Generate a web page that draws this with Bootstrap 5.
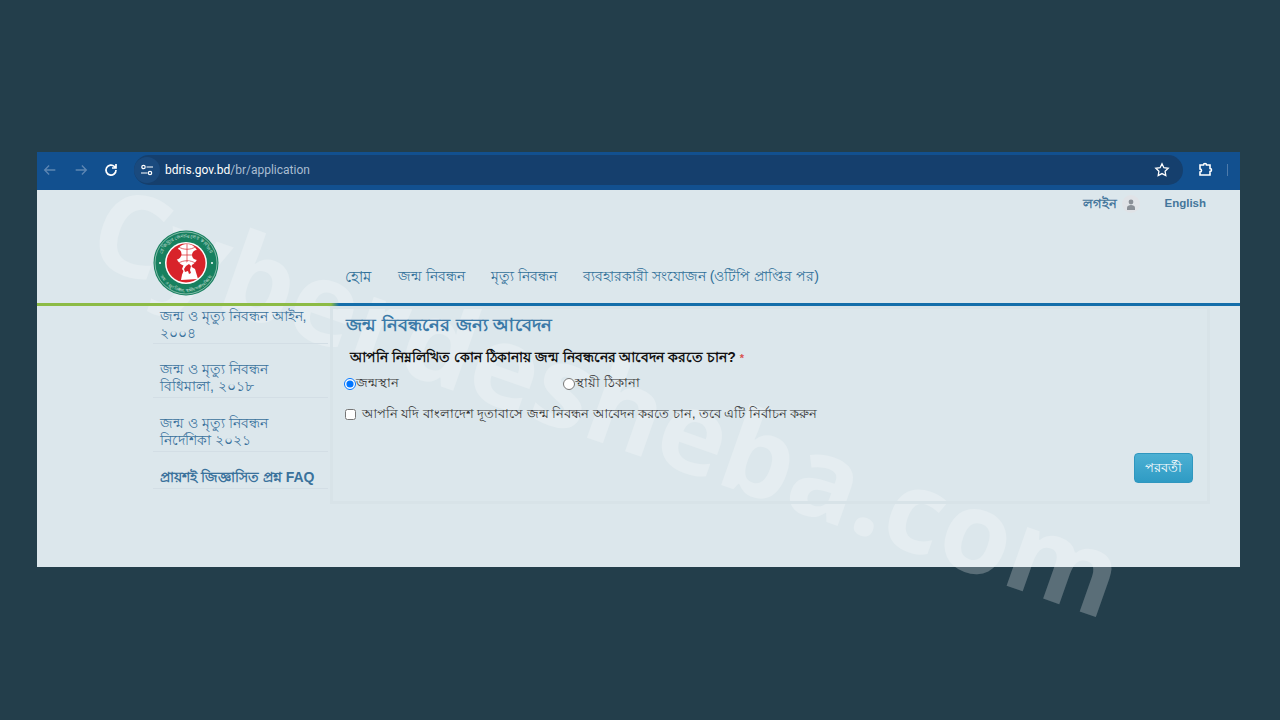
<!DOCTYPE html>
<html lang="bn">
<head>
  <meta charset="UTF-8" />
  <title>bdris application</title>
  <link href="https://cdn.jsdelivr.net/npm/bootstrap@5.3.3/dist/css/bootstrap.min.css" rel="stylesheet">
  <style>
    html, body { height: 100%; }
    body {
      background: #233e4b;
      font-family: "Liberation Sans", "Noto Sans", sans-serif;
      overflow: hidden;
      position: relative;
    }
    .shot-wrap { padding: 152px 40px 0 37px; }
    .browser-bar {
      height: 38px;
      background: #12508f;
      padding: 0 12px 3px 5px;
      position: relative;
      z-index: 2;
    }
    .nav-ic { width: 16px; height: 16px; }
    .addr-pill {
      height: 30px;
      width: 1049px;
      margin-left: 15px;
      border-radius: 15px;
      background: #153f6d;
      font-family: Roboto, sans-serif;
      font-size: 12px;
      color: #fff;
    }
    .addr-pill span.dim { color: #a9bdd2; }
    .tune-ic {
      width: 26px; height: 26px; border-radius: 50%;
      background: #1a4a7e;
      margin: 0 5px 0 0;
    }
    .page-area { background: #dce7ec; height: 377px; }
    .page-inner { position: relative; z-index: 2; }
    .top-links { height: 28px; padding-right: 34px; font-size: 11.5px; font-weight: 700; color: #44769b; }
    .login-txt { font-size: 13px; }
    .user-dot { width: 18px; height: 18px; border-radius: 50%; background: #e0e3e7; margin-left: 5px; margin-right: 2px; }
    .header-row { height: 85px; padding-left: 116px; }
    .logo-box { width: 66px; height: 66px; margin-top: 12px; }
    .main-links { gap: 26px; margin-left: 126px; margin-top: 48px; font-size: 14.1px; color: #2f6f98; font-weight: 500; }
    .home-link { font-size: 15px; margin-right: 1px; }
    .rule-line { height: 3px; background: linear-gradient(to right, #8cbb45 0, #8cbb45 294px, #146eaa 302px, #146eaa 100%); }
    .body-row { padding-left: 116px; }
    .side-menu { width: 175px; }
    .side-menu a {
      display: block;
      padding: 17px 6px 2px 7px;
      line-height: 17px;
      font-size: 14px;
      color: #3a729c;
      text-decoration: none;
      border-bottom: 1px solid #d3dee5;
    }
    .side-menu a.first-item { padding-top: 2px; padding-bottom: 1px; }
    .side-menu a.faq { font-weight: 700; }
    .form-panel {
      width: 880px;
      margin-left: 2px;
      height: 198px;
      border: 3px solid #d8e3e8;
      padding: 5px 13px;
      position: relative;
    }
    .form-title { font-size: 18.3px; letter-spacing: .18px; font-weight: 700; color: #3b7aa8; margin: 0 0 11px; line-height: 22px; }
    .q-line { font-size: 14.05px; font-weight: 700; color: #111; padding-left: 4px; margin-bottom: 6px; line-height: 20px; }
    .req-star { color: #d9534f; font-size: 11px; }
    .radio-line { font-size: 12.7px; color: #333; margin-left: -2px; }
    .radio-line input { margin: 0; width: 12px; height: 12px; }
    .radio-slot { width: 219px; }
    .check-line { font-size: 12.55px; color: #333; margin-top: 12px; margin-left: -1px; }
    .check-line input { width: 11px; height: 11px; margin: 0 6px 0 0; }
    .next-btn {
      position: absolute; right: 14px; bottom: 18px;
      width: 59px; height: 30px; padding: 0;
      background: linear-gradient(#4cb0d3, #2f9bc4);
      border: 1px solid #2f97bf;
      border-radius: 4px;
      color: #fff; font-size: 13px;
    }
    .wm-text {
      position: absolute;
      z-index: 1;
      left: 98px; top: 162px;
      transform: rotate(19.4deg);
      transform-origin: left center;
      font-family: "Open Sans", sans-serif;
      font-weight: 700;
      font-size: 114px;
      line-height: 1;
      white-space: nowrap;
      color: rgba(255,255,255,.25);
      pointer-events: none;
    }
  </style>
</head>
<body>
<div class="shot-wrap">
  <div class="browser-bar d-flex align-items-center">
    <svg class="nav-ic" viewBox="-1 -1 18 18" fill="none" stroke="#5d86b3" stroke-width="1.5"><path d="M14 8H2.5M7 3 2 8l5 5"/></svg>
    <svg class="nav-ic" style="margin-left:15px" viewBox="-1 -1 18 18" fill="none" stroke="#5d86b3" stroke-width="1.5"><path d="M2 8h11.5M9 3l5 5-5 5"/></svg>
    <svg class="nav-ic" style="margin-left:14px" viewBox="0 0 16 16" fill="none" stroke="#fff" stroke-width="1.7"><path d="M13 8a5 5 0 1 1-1.5-3.5L13 6M13 2v4H9"/></svg>
    <div class="addr-pill d-flex align-items-center">
      <div class="tune-ic d-flex align-items-center justify-content-center">
        <svg width="14" height="14" viewBox="0 0 14 14" fill="none" stroke="#fff" stroke-width="1.2"><circle cx="3.5" cy="4" r="1.7"/><path d="M6.5 4H13M1 10h6.5"/><circle cx="10" cy="10" r="1.7"/></svg>
      </div>
      <span>bdris.gov.bd<span class="dim">/br/application</span></span>
      <svg class="ms-auto" style="margin-right:13px" width="16" height="16" viewBox="0 0 16 16" fill="none" stroke="#fff" stroke-width="1.3"><path d="m8 1.8 1.9 3.9 4.3.6-3.1 3 .7 4.3L8 11.6l-3.8 2 .7-4.3-3.1-3 4.3-.6z"/></svg>
    </div>
    <svg style="margin-left:14px" width="16" height="16" viewBox="0 0 16 16" fill="none" stroke="#fff" stroke-width="1.6"><path d="M3 3h3.5a1.5 1.5 0 0 1 3 0H13v3.5a1.5 1.5 0 0 1 0 3V13H3v-3a1.5 1.5 0 0 0 0-3z"/></svg>
    <div class="ms-auto" style="width:1px;height:12px;background:#4e7bab"></div>
  </div>
  <div class="page-area">
    <div class="page-inner">
    <div class="top-links d-flex justify-content-end align-items-center">
      <span class="login-txt">লগইন</span>
      <span class="user-dot d-inline-flex align-items-center justify-content-center">
        <svg width="10" height="11" viewBox="0 0 10 11" fill="#8a8f96"><circle cx="5" cy="3" r="2.4"/><path d="M1 11V8.5C1 7 3 6 5 6s4 1 4 2.5V11z"/></svg>
      </span>
      <span style="margin-left:22px">English</span>
    </div>
    <div class="header-row d-flex">
      <svg class="logo-box" viewBox="0 0 66 66">
        <defs>
          <path id="ringTop" d="M7.5 33a25.5 25.5 0 0 1 51 0"/>
          <path id="ringBot" d="M4 33a29 29 0 0 0 58 0"/>
        </defs>
        <circle cx="33" cy="33" r="32.5" fill="#17805f"/>
        <circle cx="33" cy="33" r="31" fill="none" stroke="#cfe3da" stroke-width=".6"/>
        <text font-size="4.6" fill="#e9f3ee" text-anchor="middle"><textPath href="#ringTop" startOffset="50%">রেজিস্ট্রার জেনারেলের কার্যালয়</textPath></text>
        <text font-size="4.2" fill="#e9f3ee" text-anchor="middle"><textPath href="#ringBot" startOffset="50%">জন্ম ও মৃত্যু নিবন্ধন, স্থানীয় সরকার বিভাগ</textPath></text>
        <circle cx="33" cy="33" r="21" fill="#fff"/>
        <circle cx="33" cy="33" r="19.5" fill="#d8232a"/>
        <circle cx="34" cy="25" r="11" fill="#fff"/>
        <path d="M34 14v22M23 25h22M26 17c4 3 12 3 16 0M26 33c4-3 12-3 16 0" fill="none" stroke="#d8232a" stroke-width=".7"/>
        <circle cx="23" cy="24" r="5.5" fill="#d8232a"/>
        <circle cx="44" cy="25" r="5" fill="#d8232a"/>
        <path d="M28 50c1-6 2-9 5-12l4-2 5 3 3 10z" fill="#fff"/>
        <path d="M31 34l5-3 3 3-1 6 3 3-4 3-1-4-4 1-3-4z" fill="#fff"/>
        <path d="M33 36l3-2 2 2-1 4 1 3-2 1-1-3-3 1-1-3z" fill="#d8232a"/>
        <circle cx="7" cy="33" r="1" fill="#fff"/>
        <circle cx="59" cy="33" r="1" fill="#fff"/>
      </svg>
      <div class="main-links d-flex">
        <span class="home-link">হোম</span><span>জন্ম নিবন্ধন</span><span>মৃত্যু নিবন্ধন</span><span>ব্যবহারকারী সংযোজন (ওটিপি প্রাপ্তির পর)</span>
      </div>
    </div>
    <div class="rule-line"></div>
    <div class="body-row d-flex">
      <div class="side-menu">
        <a href="#" class="first-item">জন্ম ও মৃত্যু নিবন্ধন আইন, ২০০৪</a>
        <a href="#">জন্ম ও মৃত্যু নিবন্ধন<br>বিধিমালা, ২০১৮</a>
        <a href="#">জন্ম ও মৃত্যু নিবন্ধন<br>নির্দেশিকা ২০২১</a>
        <a href="#" class="faq">প্রায়শই জিজ্ঞাসিত প্রশ্ন FAQ</a>
      </div>
      <div class="form-panel">
        <div class="form-title">জন্ম নিবন্ধনের জন্য আবেদন</div>
        <div class="q-line">আপনি নিম্নলিখিত কোন ঠিকানায় জন্ম নিবন্ধনের আবেদন করতে চান? <span class="req-star">*</span></div>
        <div class="radio-line d-flex align-items-center">
          <div class="radio-slot d-flex align-items-center"><input type="radio" name="addr" checked><label>জন্মস্থান</label></div>
          <div class="d-flex align-items-center"><input type="radio" name="addr"><label>স্থায়ী ঠিকানা</label></div>
        </div>
        <div class="check-line d-flex align-items-center"><input type="checkbox"><label>আপনি যদি বাংলাদেশ দূতাবাসে জন্ম নিবন্ধন আবেদন করতে চান, তবে এটি নির্বাচন করুন</label></div>
        <button class="next-btn" type="button">পরবর্তী</button>
      </div>
    </div>
    </div>
  </div>
</div>
<div class="wm-text">Cyberdesheba.com</div>
</body>
</html>
